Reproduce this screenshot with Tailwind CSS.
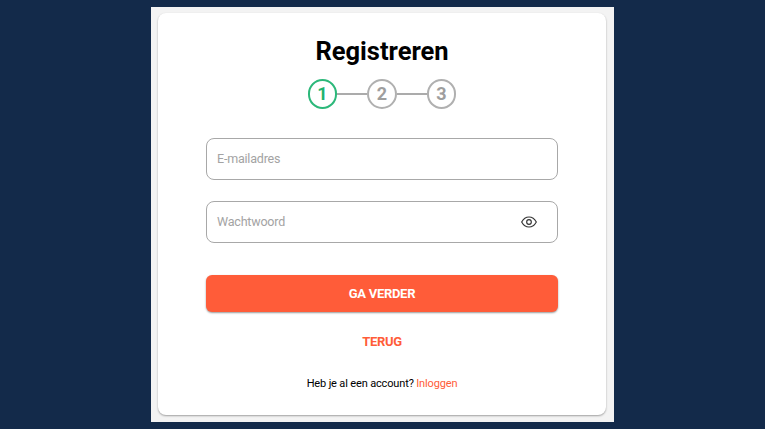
<!DOCTYPE html>
<html lang="nl">
<head>
    <meta charset="UTF-8">
    <meta name="viewport" content="width=device-width, initial-scale=1.0">
    <title>Registreren</title>
    <script src="https://cdn.jsdelivr.net/npm/@tailwindcss/browser@4"></script>
</head>
<body class="bg-[#132a4a] font-[Roboto,sans-serif] h-[429px] overflow-hidden">
    <!-- Panel -->
    <div class="w-[463px] h-[415px] mt-[7px] ml-[151px] bg-[#f3f3f3] pt-[6px] pl-[7px] pr-[8px]">
        <!-- Card -->
        <main class="h-[402px] bg-white rounded-[8px] shadow-[0_1px_2px_rgba(0,0,0,0.35)] px-[48px] flex flex-col">
            <h1 class="mt-[23px] h-[31px] leading-[31px] text-center text-[25.5px] font-bold text-black">Registreren</h1>

            <!-- Steps -->
            <div class="mt-[12px] flex items-center justify-center">
                <div class="w-[29.5px] h-[29.5px] rounded-full border-2 border-[#2cb87a] text-[#1fb36f] flex items-center justify-center text-[18px] font-bold">1</div>
                <div class="w-[30px] h-[2px] bg-[#ababab]"></div>
                <div class="w-[29.5px] h-[29.5px] rounded-full border-2 border-[#b0b0b0] text-[#9e9e9e] flex items-center justify-center text-[18px] font-bold">2</div>
                <div class="w-[30px] h-[2px] bg-[#ababab]"></div>
                <div class="w-[29.5px] h-[29.5px] rounded-full border-2 border-[#b0b0b0] text-[#9e9e9e] flex items-center justify-center text-[18px] font-bold">3</div>
            </div>

            <!-- Fields -->
            <div class="mt-[29.5px] h-[42px] border border-[#a8a8a8] rounded-[8px] px-[10px] flex items-center text-[12.5px] tracking-[-0.2px] text-[#a3a3a3]">E-mailadres</div>
            <div class="mt-[21px] h-[42px] border border-[#a8a8a8] rounded-[8px] pl-[10px] pr-[20px] flex items-center justify-between text-[12.5px] tracking-[-0.2px] text-[#a3a3a3]">
                <span>Wachtwoord</span>
                <svg class="w-[16px] h-[16px]" viewBox="0 0 24 24" fill="none" stroke="#333" stroke-width="1.7">
                    <path d="M1 12s4-7.5 11-7.5S23 12 23 12s-4 7.5-11 7.5S1 12 1 12z"/>
                    <circle cx="12" cy="12" r="3.5"/>
                </svg>
            </div>

            <!-- Actions -->
            <button class="mt-[32px] h-[37px] rounded-[6px] bg-[#ff5c39] text-white text-[13px] tracking-[-0.3px] font-bold shadow-[0_1px_2px_rgba(0,0,0,0.4)]">GA VERDER</button>
            <button class="mt-[20px] h-[18px] text-[#ff5c39] text-[13px] tracking-[-0.3px] font-bold">TERUG</button>

            <p class="mt-[27px] text-center text-[11px] tracking-[-0.15px] text-black leading-[14px]">Heb je al een account? <span class="text-[#ff5c39]">Inloggen</span></p>
        </main>
    </div>
</body>
</html>
